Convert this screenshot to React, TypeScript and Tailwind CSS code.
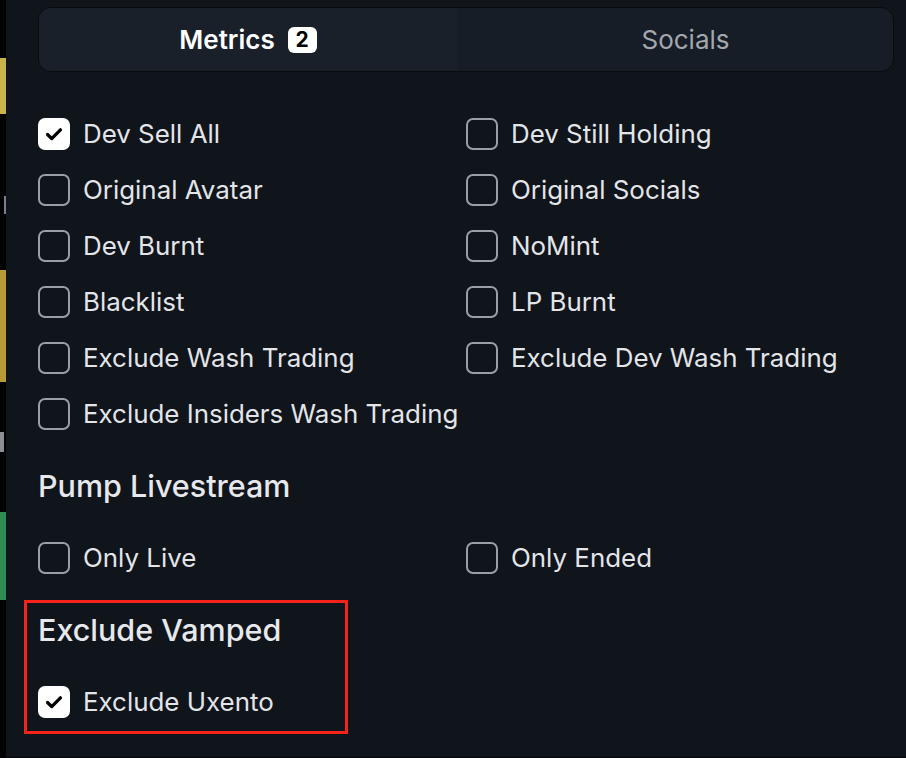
import React, { useState } from 'react';

type Option = { id: string; label: string };

const metricOptions: Option[] = [
  { id: 'devSellAll', label: 'Dev Sell All' },
  { id: 'devStillHolding', label: 'Dev Still Holding' },
  { id: 'originalAvatar', label: 'Original Avatar' },
  { id: 'originalSocials', label: 'Original Socials' },
  { id: 'devBurnt', label: 'Dev Burnt' },
  { id: 'noMint', label: 'NoMint' },
  { id: 'blacklist', label: 'Blacklist' },
  { id: 'lpBurnt', label: 'LP Burnt' },
  { id: 'excludeWash', label: 'Exclude Wash Trading' },
  { id: 'excludeDevWash', label: 'Exclude Dev Wash Trading' },
  { id: 'excludeInsidersWash', label: 'Exclude Insiders Wash Trading' },
];

const livestreamOptions: Option[] = [
  { id: 'onlyLive', label: 'Only Live' },
  { id: 'onlyEnded', label: 'Only Ended' },
];

const CheckIcon: React.FC = () => (
  <svg viewBox="0 0 24 24" className="w-[22px] h-[22px]" fill="none" stroke="#000" strokeWidth={3.6} strokeLinecap="round" strokeLinejoin="round">
    <path d="M5 12.5l4.5 4.5L19 7.5" />
  </svg>
);

const CheckRow: React.FC<{ option: Option; checked: boolean; onToggle: (id: string) => void }> = ({ option, checked, onToggle }) => (
  <label className="flex items-center h-[56px] gap-[13px] cursor-pointer select-none" onClick={() => onToggle(option.id)}>
    <span
      className={
        checked
          ? 'flex items-center justify-center w-[32px] h-[32px] rounded-[7px] bg-white'
          : 'flex items-center justify-center w-[32px] h-[32px] rounded-[7px] border-2 border-[#9a9ea6]'
      }
    >
      {checked && <CheckIcon />}
    </span>
    <span className="text-[25.9px] text-[#e3e5e9] leading-none">{option.label}</span>
  </label>
);

const App: React.FC = () => {
  const [tab, setTab] = useState<'metrics' | 'socials'>('metrics');
  const [checked, setChecked] = useState<Record<string, boolean>>({ devSellAll: true, excludeUxento: true });

  const toggle = (id: string) => setChecked((prev) => ({ ...prev, [id]: !prev[id] }));

  return (
    <div className="flex w-[906px] h-[758px] bg-black font-['Inter',sans-serif] overflow-hidden">
      {/* edge of the list behind the panel */}
      <div className="w-[6px] flex flex-col shrink-0 bg-[#030303]">
        <div className="h-[58px]" />
        <div className="h-[56px] bg-[#c9b44c]" />
        <div className="h-[82px]" />
        <div className="h-[18px] bg-[#7b7f86] w-[2px] ml-[4px]" />
        <div className="h-[56px]" />
        <div className="h-[112px] bg-[#b99a37]" />
        <div className="h-[50px]" />
        <div className="h-[20px] bg-[#8c9096] w-[4px]" />
        <div className="h-[60px]" />
        <div className="h-[88px] bg-[#2f8c54]" />
        <div className="flex-1" />
      </div>

      <div className="relative flex-1 flex flex-col bg-[#10141b] border-b border-[#05070a]">
        <div className="pl-[32px] pr-[12px] pt-[7px]">
          <div className="flex h-[65px] rounded-[13px] border border-[#080a0e] bg-[#171d26] overflow-hidden">
            <button
              onClick={() => setTab('metrics')}
              className={`w-[418px] flex items-center justify-center gap-[13px] ${tab === 'metrics' ? 'bg-[#19202a]' : ''}`}
            >
              <span className={`text-[26px] font-semibold ${tab === 'metrics' ? 'text-white' : 'text-[#a3a7ae]'}`}>Metrics</span>
              <span className="flex items-center justify-center w-[29px] h-[26px] rounded-[6px] bg-white text-black text-[21px] font-bold">2</span>
            </button>
            <button
              onClick={() => setTab('socials')}
              className={`flex-1 flex items-center justify-center pl-[21px] ${tab === 'socials' ? 'bg-[#19202a]' : ''}`}
            >
              <span className={`text-[26px] ${tab === 'socials' ? 'text-white font-semibold' : 'text-[#a3a7ae]'}`}>Socials</span>
            </button>
          </div>
        </div>

        <div className="pl-[32px] pt-[34px]">
          <div className="grid grid-cols-[428px_1fr]">
            {metricOptions.map((o) => (
              <CheckRow key={o.id} option={o} checked={!!checked[o.id]} onToggle={toggle} />
            ))}
          </div>

          <div className="h-[88px] flex items-center">
            <h3 className="text-[30.5px] font-medium text-[#e6e8eb]">Pump Livestream</h3>
          </div>
          <div className="grid grid-cols-[428px_1fr]">
            {livestreamOptions.map((o) => (
              <CheckRow key={o.id} option={o} checked={!!checked[o.id]} onToggle={toggle} />
            ))}
          </div>

          <div className="h-[88px] flex items-center">
            <h3 className="text-[30.5px] font-medium text-[#e6e8eb]">Exclude Vamped</h3>
          </div>
          <CheckRow option={{ id: 'excludeUxento', label: 'Exclude Uxento' }} checked={!!checked.excludeUxento} onToggle={toggle} />
        </div>

        {/* highlight annotation */}
        <div className="absolute left-[18px] top-[600px] w-[324px] h-[134px] border-[3px] border-[#f5231a] pointer-events-none" />
      </div>
    </div>
  );
};

export default App;
